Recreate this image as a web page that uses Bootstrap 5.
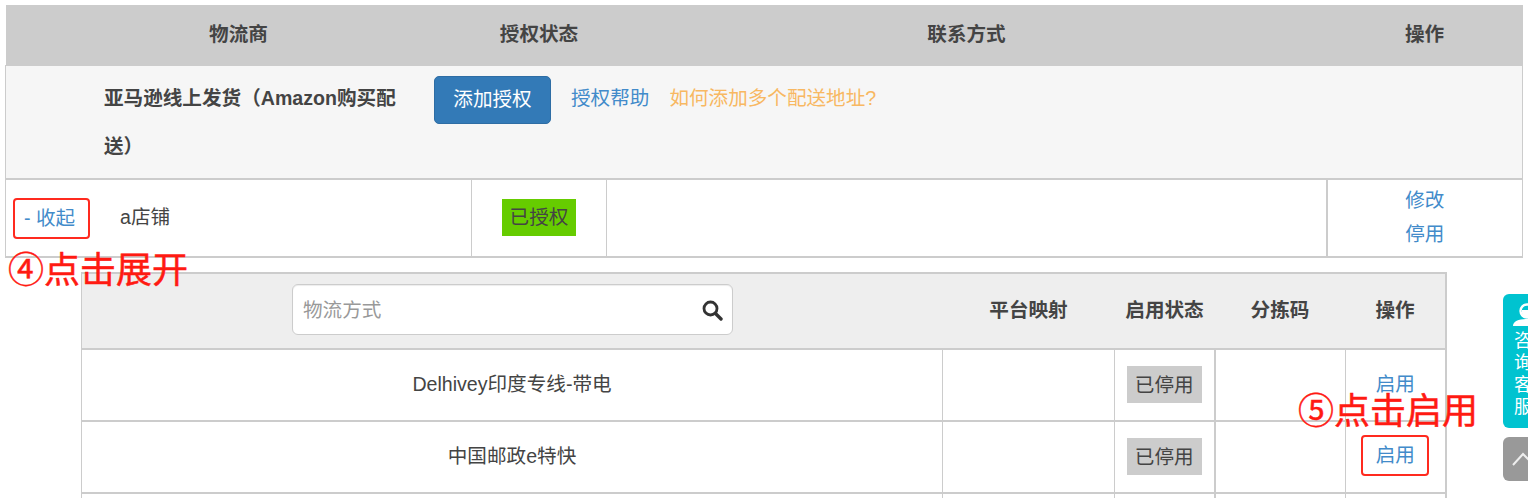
<!DOCTYPE html>
<html lang="zh-CN">
<head>
<meta charset="utf-8">
<title>物流授权</title>
<link href="https://cdn.jsdelivr.net/npm/bootstrap@5.3.0/dist/css/bootstrap.min.css" rel="stylesheet">
<style>
html,body{height:499px;overflow:hidden;background:#fff}
body{font-family:"Liberation Sans","Noto Sans CJK SC",sans-serif;font-size:19.6px;color:#444;position:relative}
a{color:#428bca;text-decoration:none}
.page-wrap{padding:5px 5px 0}
.grid-table{table-layout:fixed;margin:0;color:#444;--bs-table-color:#444;--bs-table-bg:transparent;border-collapse:collapse}
.grid-table.table>:not(caption)>*>*{padding:0;border:1px solid #ccc;vertical-align:middle;text-align:center;color:#444;background:transparent;box-shadow:none;font-weight:400}
.grid-table.table>:not(caption)>*>th{font-weight:700}
.carrier-table{width:1517px}
.carrier-table.table>thead>tr>th{height:60px;background:#ccc;border-color:#ccc;border-width:0}
.carrier-table.table>tbody>tr.group-row>td{height:112px;background:#f6f6f6;text-align:left;border-bottom-width:2px;padding:8px 0}
.carrier-table.table>tbody>tr.shop-row>td{height:78px;border-bottom-width:2px}
.carrier-table.table>tbody>tr.shop-row>td.ops-cell{border-left-width:2px}
.group-title{width:300px;margin-left:98px;line-height:48px;font-weight:700;margin-right:30px}
.add-btn{width:117px;height:48px;padding:0;font-size:19.6px;background:#337ab7;border-color:#2e6da4;color:#fff;border-radius:5px;margin-top:2px;line-height:44px}
.help-link{margin-left:20px;line-height:48px}
.tip-link{color:#f8b862}
.annot-box{display:inline-block;border:2px solid #ff2a1f;border-radius:4px}
.collapse-link{width:77px;height:41px;line-height:37px;padding-left:9px;margin-top:2px}
.shop-cell{padding-left:7px!important}
.shop-name{margin-left:30px}
.state-tag{display:inline-block;height:37px;line-height:37px;padding:0 8px}
.state-on{background:#6c0}
.state-off{background:#ccc;line-height:39px}
.ops-cell a{display:block;line-height:34px;position:relative;top:-1px}
.method-wrap{margin:14px 0 0 76px;width:1364px}
.method-table{width:1364px}
.method-table.table>thead>tr>th{height:76px;background:#eee;border-width:2px 0 2px 0}
.method-table.table>thead>tr>th:first-child{border-left-width:1px}
.method-table.table>thead>tr>th:last-child{border-right-width:2px}
.method-table.table>tbody>tr>td{height:72px;border-bottom-width:2px}
.method-table.table>tbody>tr>td.split-cell{border-left-width:2px}
.method-table.table>tbody>tr>td:last-child{border-right-width:2px}
.method-table.table>tbody>tr.tail-row>td{height:5px;border-bottom-width:0}
.search-box{width:441px;height:51px;margin:0 0 2px 210px;background:#fff;border:1px solid #ccc;border-radius:6px;padding:0 9px 0 10px;color:#999;font-weight:400;box-shadow:inset 0 1px 1px rgba(0,0,0,.075)}
.search-box span{padding-top:2px}
.search-box svg{width:22px;height:22px}
.enable-link{width:68px;height:41px;line-height:37px;text-align:center;margin-top:-2px}
.annot-text{position:absolute;color:#ff1a12;font-size:36px;line-height:40px;white-space:nowrap;font-weight:400;-webkit-text-stroke:.5px #ff1a12}
.annot-four{left:8px;top:251px}
.annot-five{left:1298px;top:392px}
.service-tab{position:absolute;left:1503px;top:294px;width:40px;height:134px;background:#00c3d0;border-radius:6px 0 0 6px;color:#fff;padding:9px 0 0 11px;font-size:18px;line-height:22px;overflow:hidden}
.service-tab svg{display:block;width:26px;height:24px;margin:0 0 3px -1px}
.top-tab{position:absolute;left:1503px;top:437px;width:40px;height:44px;background:#999;border-radius:6px 0 0 6px}
.top-tab svg{display:block;width:25px;height:44px}
</style>
</head>
<body>
<div class="page-wrap">
  <table class="table grid-table carrier-table">
    <colgroup><col style="width:466px"><col style="width:135px"><col style="width:720px"><col style="width:196px"></colgroup>
    <thead>
      <tr><th>物流商</th><th>授权状态</th><th>联系方式</th><th>操作</th></tr>
    </thead>
    <tbody>
      <tr class="group-row">
        <td colspan="4">
          <div class="d-flex align-items-start">
            <div class="group-title">亚马逊线上发货（Amazon购买配送）</div>
            <a href="#" class="btn btn-primary add-btn">添加授权</a>
            <a href="#" class="help-link">授权帮助</a>
            <a href="#" class="help-link tip-link">如何添加多个配送地址?</a>
          </div>
        </td>
      </tr>
      <tr class="shop-row">
        <td class="shop-cell text-start">
          <div class="d-flex align-items-center">
            <a href="#" class="annot-box collapse-link">- 收起</a>
            <span class="shop-name">a店铺</span>
          </div>
        </td>
        <td><span class="state-tag state-on">已授权</span></td>
        <td></td>
        <td class="ops-cell"><a href="#">修改</a><a href="#">停用</a></td>
      </tr>
    </tbody>
  </table>

  <div class="method-wrap">
    <table class="table grid-table method-table">
      <colgroup><col style="width:861px"><col style="width:172px"><col style="width:100px"><col style="width:131px"><col style="width:100px"></colgroup>
      <thead>
        <tr>
          <th>
            <div class="search-box d-flex align-items-center justify-content-between">
              <span>物流方式</span>
              <svg viewBox="0 0 22 22" fill="none" stroke="#333" aria-hidden="true"><circle cx="9.5" cy="9.5" r="6.5" stroke-width="2.8"/><path d="M14.5 14.5L20 20" stroke-width="3.4" stroke-linecap="round"/></svg>
            </div>
          </th>
          <th>平台映射</th><th>启用状态</th><th>分拣码</th><th>操作</th>
        </tr>
      </thead>
      <tbody>
        <tr>
          <td>Delhivey印度专线-带电</td><td></td>
          <td><span class="state-tag state-off">已停用</span></td>
          <td class="split-cell"></td>
          <td><a href="#">启用</a></td>
        </tr>
        <tr>
          <td>中国邮政e特快</td><td></td>
          <td><span class="state-tag state-off">已停用</span></td>
          <td class="split-cell"></td>
          <td><a href="#" class="annot-box enable-link">启用</a></td>
        </tr>
        <tr class="tail-row">
          <td></td><td></td><td></td><td class="split-cell"></td><td></td>
        </tr>
      </tbody>
    </table>
  </div>
</div>

<div class="annot-text annot-four">④点击展开</div>
<div class="annot-text annot-five">⑤点击启用</div>

<div class="service-tab">
  <svg viewBox="0 0 26 24" fill="#fff" aria-hidden="true"><circle cx="14" cy="8" r="6.5" fill="none" stroke="#fff" stroke-width="2.4"/><path d="M9 7h10v3a5 5 0 0 1-10 0z"/><path d="M0 23c0-5 6-7 14-7s14 2 14 7z"/></svg>
  咨<br>询<br>客<br>服
</div>
<div class="top-tab"><svg viewBox="0 0 25 44" fill="none" stroke="#eee" stroke-width="2" aria-hidden="true"><path d="M10 28L20 17L31 28"/></svg></div>
<script src="https://cdn.jsdelivr.net/npm/bootstrap@5.3.0/dist/js/bootstrap.bundle.min.js"></script>
</body>
</html>
